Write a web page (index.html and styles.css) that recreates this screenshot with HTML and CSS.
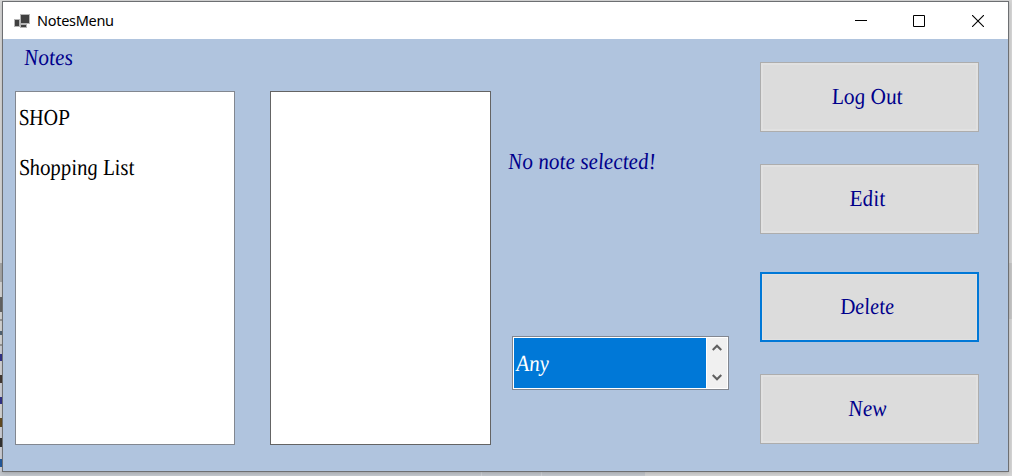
FILE: index.html
```html
<!DOCTYPE html>
<html lang="en">
<head>
<meta charset="utf-8">
<title>NotesMenu</title>
<link rel="stylesheet" href="styles.css">
</head>
<body>
<div class="desktop">
  <div class="window">
    <header class="titlebar">
      <svg class="app-icon" width="16" height="14" viewBox="0 0 16 14" shape-rendering="crispEdges"><path fill="#b5b5b5" d="M6 0h10v10H6zM0 5h6v8H0zM6 10h7v4H6z"/><path fill="#404040" d="M7 1h8v8H7zM1 6h4v6H1zM7 11h5v2H7z"/></svg>
      <span class="title">NotesMenu</span>
      <div class="controls">
        <svg width="12" height="12" viewBox="0 0 12 12"><path d="M0 5.5h12" stroke="#000" shape-rendering="crispEdges"/></svg>
        <svg width="12" height="12" viewBox="0 0 12 12"><path d="M.5 .5h11v11H.5z" fill="none" stroke="#000"/></svg>
        <svg class="close" width="12" height="12" viewBox="0 0 12 12"><path d="M0 0L12 12M12 0L0 12" stroke="#000" stroke-width="1.1"/></svg>
      </div>
    </header>
    <main class="form">
      <section class="lists">
        <div class="heading"><span class="script notes">Notes</span></div>
        <div class="boxes">
          <div class="list">
            <div class="row"><span class="script shop">SHOP</span></div>
            <div class="row"><span class="script shopping">Shopping List</span></div>
          </div>
          <div class="list preview"></div>
        </div>
      </section>
      <section class="detail">
        <div class="message"><span class="script none">No note selected!</span></div>
        <div class="updown">
          <div class="value"><span class="script any">Any</span></div>
          <div class="spin">
            <svg width="10" height="7" viewBox="0 0 10 7"><path d="M.7 6L5 1.7L9.3 6" fill="none" stroke="#606060" stroke-width="2.2"/></svg>
            <svg width="10" height="7" viewBox="0 0 10 7"><path d="M.7 1L5 5.3L9.3 1" fill="none" stroke="#606060" stroke-width="2.2"/></svg>
          </div>
        </div>
      </section>
      <section class="actions">
        <button class="btn"><span class="script logout">Log Out</span></button>
        <button class="btn"><span class="script edit">Edit</span></button>
        <button class="btn focused"><span class="script delete">Delete</span></button>
        <button class="btn"><span class="script new">New</span></button>
      </section>
    </main>
  </div>
</div>
</body>
</html>
```
FILE: styles.css
```css
* { box-sizing: border-box; }
body { margin: 0; }
svg { display: block; }
.desktop {
  width: 1012px; height: 476px; padding: 1px 0 0 2px; overflow: hidden;
  background:
    linear-gradient(to bottom, #dadada 0 263px, #aaa 263px 282px, #d8d8d8 282px 297px, #666 297px 312px, #d8d8d8 312px 319px, #999 319px 321px, #d8d8d8 321px 331px, #567 331px 335px, #d8d8d8 335px 344px, #999 344px 346px, #d0d2da 346px 354px, #33338a 354px 361px, #d4d4d8 361px 375px, #453a35 375px 383px, #d0d2da 383px 397px, #33338a 397px 404px, #d8d8d8 404px 418px, #654d22 418px 427px, #d0d2da 427px 438px, #333 438px 447px, #d0d2da 447px 459px, #235ba0 459px 467px, #d0d2da 467px) 0 0 / 2px 471px no-repeat,
    linear-gradient(to bottom, #d6d6d6 0 263px, #c6c6c6 263px 319px, #d6d6d6 319px) 100% 0 / 3px 471px no-repeat,
    linear-gradient(to right, #c3c7cd 0 481px, #d0d3d7 481px 482px, #c3c7cd 482px 541px, #d0d3d7 541px 542px, #c3c7cd 542px 645px, #d4d4d4 645px) 0 100% / 100% 5px no-repeat,
    #dadada;
}
.window {
  width: 1007px; height: 471px; border: 1px solid #6d6f72; background: #b0c4de;
  box-shadow: 0 1px 4px rgba(0,0,0,.2);
}
.titlebar { height: 37px; background: #fff; display: flex; align-items: center; padding: 0 24px 0 11px; }
.app-icon { margin-top: 1px; }
.title { font: 14.5px/20px "Noto Sans", sans-serif; letter-spacing: -.3px; margin: -2px 0 0 7px; }
.controls { margin-left: auto; display: flex; gap: 46px; }
.close { margin-left: 1px; }
.form { display: flex; height: 432px; padding-left: 12px; }
.script {
  display: inline-block; flex: none; white-space: nowrap; font: italic 23px/30px "Liberation Serif", serif;
  transform: scaleX(var(--fit)) skewX(var(--lean, 8deg)); transform-origin: left center;
}
.notes { --fit: .93; --lean: 5deg; }
.shop { --fit: .87; }
.shopping { --fit: .905; }
.none { --fit: .925; --lean: 5deg; }
.any { --fit: .92; --lean: 4deg; }
.logout { --fit: .93; }
.edit { --fit: .93; }
.delete { --fit: .9; }
.new { --fit: .94; --lean: 5deg; }
.lists { width: 476px; }
.heading { height: 52px; padding: 4px 0 0 9px; color: #00008b; }
.boxes { display: flex; gap: 35px; }
.list { width: 220px; height: 354px; border: 1px solid #828790; background: #fff; color: #000; padding: 1px 0 0 3px; }
.preview { width: 221px; border-color: #646464; }
.row { height: 50px; padding-top: 10px; }
.detail { width: 217px; margin-left: 21px; padding-top: 108px; }
.message { height: 189px; margin-left: -4px; color: #00008b; }
.updown { display: flex; justify-content: space-between; height: 54px; border: 1px solid #828790; background: #fff; padding: 1px; }
.value { width: 192px; background: #0078d7; color: #fff; padding: 11px 0 0 2px; }
.spin { width: 20px; background: #f0f0f0; display: flex; flex-direction: column; justify-content: space-between; align-items: center; padding: 6px 0 7px; }
.actions { margin-left: 31px; padding-top: 23px; display: flex; flex-direction: column; }
.btn {
  flex: none; width: 219px; height: 70px; margin: 0 0 32px; padding: 0 5px 0 0; border: 1px solid #adadad; border-radius: 0;
  background: #dcdcdc; box-shadow: inset 0 0 0 2px #e1e1e1; color: #00008b;
  display: flex; align-items: center; justify-content: center;
}
.btn .script { transform-origin: center; }
.btn:nth-child(2) { margin-bottom: 38px; }
.btn:last-child { margin-bottom: 0; }
.btn.focused { border: 2px solid #0078d7; box-shadow: inset 0 0 0 1px #e1e1e1; }
```
